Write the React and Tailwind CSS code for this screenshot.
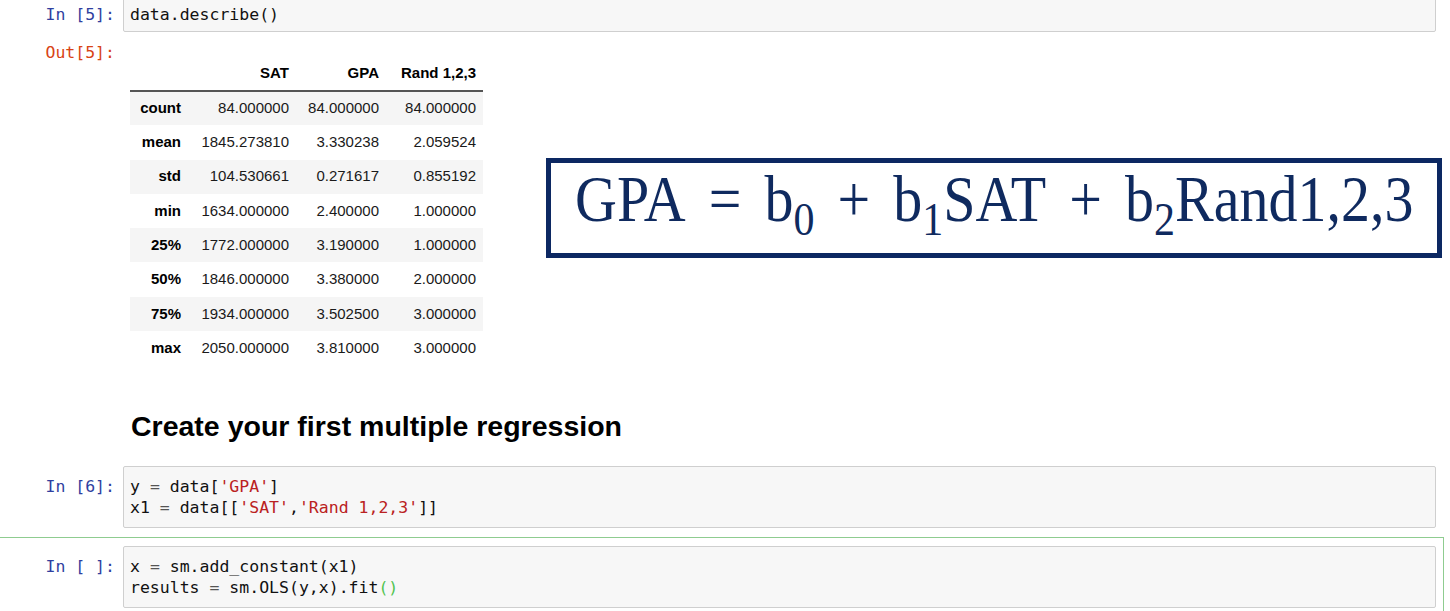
import React from 'react';

const rows = [
  ['count', '84.000000', '84.000000', '84.000000'],
  ['mean', '1845.273810', '3.330238', '2.059524'],
  ['std', '104.530661', '0.271617', '0.855192'],
  ['min', '1634.000000', '2.400000', '1.000000'],
  ['25%', '1772.000000', '3.190000', '1.000000'],
  ['50%', '1846.000000', '3.380000', '2.000000'],
  ['75%', '1934.000000', '3.502500', '3.000000'],
  ['max', '2050.000000', '3.810000', '3.000000'],
];

const mono = "font-['DejaVu_Sans_Mono','Liberation_Mono',monospace] text-[16.5px] leading-[21px]";

const Op = ({ children }) => <span className="text-[#555]">{children}</span>;
const Str = ({ children }) => <span className="text-[#ba2121]">{children}</span>;

const Prompt = ({ children, color = 'text-[#303f9f]', width = 'w-[123px]' }) => (
  <div className={`${width} shrink-0 pr-[8px] text-right ${mono} ${color}`}>{children}</div>
);

const CodeBox = ({ children, extra = '' }) => (
  <div className={`flex-1 border border-[#cfcfcf] bg-[#f7f7f7] rounded-[2px] px-[6px] whitespace-pre text-[#111] ${mono} ${extra}`}>
    {children}
  </div>
);

const Sub = ({ children }) => (
  <span className="text-[42px] align-[-12px]">{children}</span>
);

const MathOp = ({ children }) => <span className="inline-block mx-[23px]">{children}</span>;

export default function App() {
  return (
    <div className="w-[1450px] h-[611px] overflow-hidden bg-white">
      {/* In [5] */}
      <div className="flex -mt-[6px] pr-[14px]">
        <Prompt>
          <div className="pt-[10px]">In [5]:</div>
        </Prompt>
        <CodeBox extra="pt-[9px] pb-[6px]">data.describe()</CodeBox>
      </div>

      {/* Out [5] */}
      <div className="flex">
        <Prompt color="text-[#d84315]">
          <div className="pt-[10px]">Out[5]:</div>
        </Prompt>
        <div className="flex items-start pt-[24px] pl-[7px]">
          <table className="table-fixed border-collapse text-[15px] font-['Liberation_Sans',Arial,sans-serif] text-[#1a1a1a]">
            <colgroup>
              <col className="w-[58px]" />
              <col className="w-[108px]" />
              <col className="w-[90px]" />
              <col className="w-[97px]" />
            </colgroup>
            <thead>
              <tr className="h-[35px]">
                <th className="border-b-2 border-[#555]" />
                <th className="border-b-2 border-[#555] text-right pr-[7px] font-bold text-black">SAT</th>
                <th className="border-b-2 border-[#555] text-right pr-[7px] font-bold text-black">GPA</th>
                <th className="border-b-2 border-[#555] text-right pr-[7px] font-bold text-black">Rand 1,2,3</th>
              </tr>
            </thead>
            <tbody>
              {rows.map((r, i) => (
                <tr key={r[0]} className={`h-[34.3px] ${i % 2 === 0 ? 'bg-[#f5f5f5]' : 'bg-white'}`}>
                  <th className="text-right pr-[7px] font-bold text-black">{r[0]}</th>
                  <td className="text-right pr-[7px]">{r[1]}</td>
                  <td className="text-right pr-[7px]">{r[2]}</td>
                  <td className="text-right pr-[7px]">{r[3]}</td>
                </tr>
              ))}
            </tbody>
          </table>

          {/* regression formula */}
          <div className="ml-[63px] mt-[102px] w-[896px] h-[100px] border-[5px] border-[#0c2862] pl-[24px] pt-[6px]">
            <span className="inline-block leading-[64px] text-[58px] scale-y-[1.12] whitespace-nowrap text-[#0f2a5f] font-['Liberation_Serif','Times_New_Roman',serif]">
              GPA<MathOp>=</MathOp>b<Sub>0</Sub>
              <MathOp>+</MathOp>b<Sub>1</Sub>SAT
              <MathOp>+</MathOp>b<Sub>2</Sub>Rand1,2,3
            </span>
          </div>
        </div>
      </div>

      {/* markdown heading */}
      <h2 className="mt-[44px] pl-[131px] text-[28.5px] leading-[34px] font-bold text-black font-['Liberation_Sans',Arial,sans-serif]">
        Create your first multiple regression
      </h2>

      {/* In [6] */}
      <div className="flex mt-[23px] pr-[14px]">
        <Prompt>
          <div className="pt-[10px]">In [6]:</div>
        </Prompt>
        <CodeBox extra="pt-[9px] pb-[9px]">
          {'y '}<Op>=</Op>{' data['}<Str>'GPA'</Str>{']'}
          {'\n'}
          {'x1 '}<Op>=</Op>{' data[['}<Str>'SAT'</Str>{','}<Str>'Rand 1,2,3'</Str>{']]'}
        </CodeBox>
      </div>

      {/* In [ ] selected */}
      <div className="-ml-[10px] mr-[6px] mt-[9px] border border-[#8fcc90] pt-[8px] pb-[8px] pr-[7px]">
        <div className="flex">
          <Prompt width="w-[132px]">
            <div className="pt-[10px]">In [ ]:</div>
          </Prompt>
          <CodeBox extra="pt-[9px] pb-[9px]">
            {'x '}<Op>=</Op>{' sm.add_constant(x1)'}
            {'\n'}
            {'results '}<Op>=</Op>{' sm.OLS(y,x).fit'}<span className="text-[#4fc34f]">()</span>
          </CodeBox>
        </div>
      </div>
    </div>
  );
}
